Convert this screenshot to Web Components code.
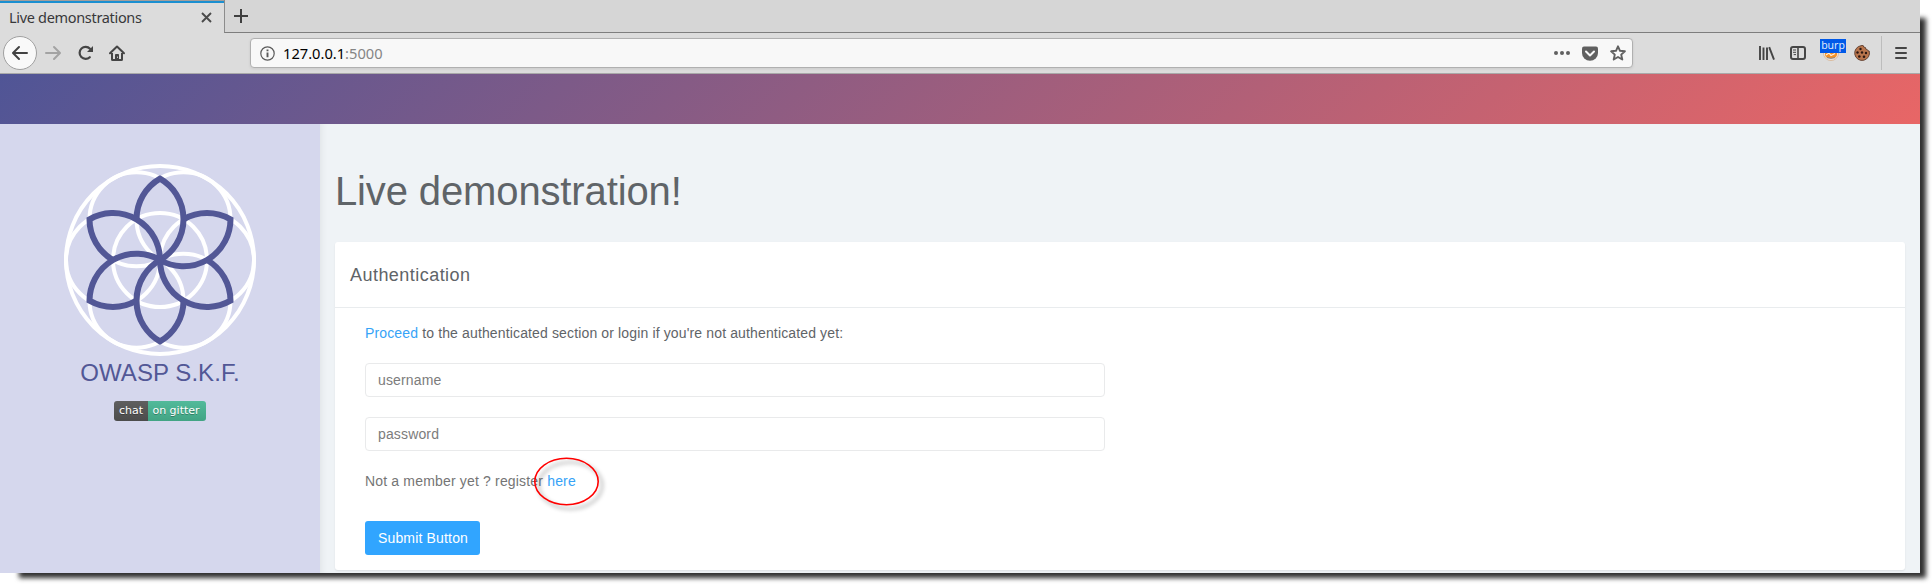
<!DOCTYPE html>
<html lang="en">
<head>
<meta charset="utf-8">
<title>Live demonstrations</title>
<style>
html,body{margin:0;background:#fff;overflow:hidden}
body{font-family:"Liberation Sans",Arial,sans-serif}
</style>
</head>
<body>
<app-window>
  <browser-tabs slot="chrome">Live demonstrations</browser-tabs>
  <browser-toolbar slot="chrome"></browser-toolbar>
  <page-banner slot="chrome"></page-banner>
  <side-bar slot="side">OWASP S.K.F.</side-bar>
  <page-title>Live demonstration!</page-title>
  <auth-card></auth-card>
</app-window>
<script>
const define=(name,html)=>customElements.define(name,class extends HTMLElement{
  constructor(){super();this.attachShadow({mode:'open'}).innerHTML=html;}
});

define('app-window',`<style>
:host{display:block;position:relative;width:1932px;height:585px;overflow:hidden}
.shade{position:absolute;left:19px;top:18px;width:1906.5px;height:559.5px;background:#303030;box-shadow:0 0 9px #303030;z-index:0;clip-path:none}
.shade{background:none;box-shadow:none}
.shade::before{content:"";position:absolute;inset:0;background:#303030;filter:blur(2.400px)}
.win{position:relative;z-index:1;width:1920px;height:573px;display:flex;flex-direction:column;background:#eff3f6;overflow:hidden}
.body{flex:1;display:flex;min-height:0}
main{flex:1;min-width:0;padding:0 15px;box-shadow:inset 6px 0 6px -4px rgba(0,0,0,.06)}
</style><div class="shade"></div><div class="win"><slot name="chrome"></slot>
<div class="body"><slot name="side"></slot><main><slot></slot></main></div></div>`);

define('browser-tabs',`<style>
:host{display:flex;height:33px;background:#d6d6d6;font:14.5px "Noto Sans",sans-serif;color:#38383a;box-sizing:border-box}
.tab{width:224px;box-sizing:border-box;background:#dcdcdc;border-top:1px solid #a39e9b;box-shadow:inset 0 2px #1b8fd0;padding:0 12px 0 9px;display:flex;align-items:center;justify-content:space-between}
.t{display:block;letter-spacing:-.32px;margin-top:-1px}
.rest{flex:1;border-left:1px solid #8c8c8c;border-bottom:1px solid #7e7e7e;padding:9px 0 0 9px}
svg{display:block}
</style><div class="tab"><span class="t"><slot></slot></span>
<svg width="11" height="11" viewBox="0 0 11 11"><path d="M1 1l9 9M10 1l-9 9" stroke="#4a4a4a" stroke-width="1.9"/></svg></div>
<div class="rest"><svg width="14" height="14" viewBox="0 0 14 14"><path d="M7 0v14M0 7h14" stroke="#3f3f3f" stroke-width="2"/></svg></div>`);

define('browser-toolbar',`<style>
:host{display:flex;align-items:center;height:41px;box-sizing:border-box;background:#dcdcdc;border-bottom:1px solid #a9a9a9;padding:0 13px 0 3px;color:#454545}
svg{display:block;flex:none;overflow:visible}
.back{width:32px;height:32px;border:1px solid #a0a0a0;border-radius:50%;background:#f9f9f9;display:flex;align-items:center;justify-content:center}
.url{display:flex;align-items:center;width:1383px;height:30px;box-sizing:border-box;margin-left:125px;border:1px solid #b0b0b0;border-radius:4px;background:#f8f8f8;box-shadow:0 1px 3px rgba(0,0,0,.08);padding:0 6px 0 9px;font:14.67px "Noto Sans",sans-serif;color:#000}
.url span{flex:1;padding-left:8px}.url i{font-style:normal;color:#858585}
.burp{position:relative;width:26px;height:28px;margin-left:14px}
.burp b{position:absolute;left:0;top:0;width:26px;height:14px;background:#0059e8;color:#dfe8fa;font:10.5px/13px "Noto Sans",sans-serif;text-align:center}
.burp svg{position:absolute;left:3px;top:6px}
.sep{width:1px;height:34px;background:#bdbdbd;margin-left:11px}
</style>
<div class="back"><svg width="16" height="14" viewBox="0 0 16 14" fill="none" stroke="#424242" stroke-width="2" stroke-linecap="round" stroke-linejoin="round"><path d="M15 7H1.5M7 1L1 7l6 6"/></svg></div>
<svg style="margin-left:8px" width="16" height="14" viewBox="0 0 16 14" fill="none" stroke="#a3a3a3" stroke-width="2" stroke-linecap="round" stroke-linejoin="round"><path d="M1 7h13.5M9 1l6 6-6 6"/></svg>
<svg style="margin-left:17px" width="16" height="16" viewBox="0 0 16 16" fill="none" stroke="#454545" stroke-width="2.2" stroke-linecap="round"><path d="M11.8 12.2A6 6 0 1 1 12 3.8"/><path d="M15 1v6H9z" fill="#454545" stroke="none"/></svg>
<svg style="margin-left:15px" width="16" height="16" viewBox="0 0 16 16" fill="none" stroke="#454545" stroke-width="2"><path d="M1 8.3L8 1.5l7 6.8" stroke-linecap="round" stroke-linejoin="round"/><path d="M3 8v6.5q0 .5.5.5h9q.5 0 .5-.5V8" /><path d="M6 15V9.8q0-.8.8-.8h2.4q.8 0 .8.8V15z" fill="#454545" stroke="none"/><path d="M8.5 11.6v1.2" stroke="#dcdcdc" stroke-width="1"/></svg>
<div class="url">
<svg width="15" height="15" viewBox="0 0 15 15" fill="none" stroke="#5a5a5a"><circle cx="7.5" cy="7.5" r="6.7" stroke-width="1.2"/><path d="M7.5 6.6v4.6M7.5 3.5v1.8" stroke-width="1.9"/></svg>
<span>127.0.0.1<i>:5000</i></span>
<svg width="16" height="4" viewBox="0 0 16 4" fill="#606060"><circle cx="2" cy="2" r="2"/><circle cx="8" cy="2" r="2"/><circle cx="14" cy="2" r="2"/></svg>
<svg style="margin-left:12px" width="16" height="15" viewBox="0 0 16 15"><path d="M2 .5h12q2 0 2 2V7a8 7.7 0 0 1-16 0V2.5q0-2 2-2z" fill="#606060"/><path d="M4 5.5l4 4 4-4" fill="none" stroke="#f8f8f8" stroke-width="2" stroke-linecap="round" stroke-linejoin="round"/></svg>
<svg style="margin-left:12px" width="16" height="16" viewBox="0 0 16 16"><path d="M8 1.3l2 4.5 4.9.5-3.7 3.3 1.1 4.9L8 12l-4.3 2.5 1.1-4.9L1.1 6.3 6 5.8z" fill="none" stroke="#606060" stroke-width="1.9" stroke-linejoin="round"/></svg>
</div>
<svg style="margin-left:126px" width="16" height="14" viewBox="0 0 16 14" fill="none" stroke="#454545" stroke-width="1.9"><path d="M1 0v14M4.5 1.5V14M8 1.5V14M10.2 1.2L15 13.6"/></svg>
<svg style="margin-left:15px" width="16" height="14" viewBox="0 0 16 14" fill="none" stroke="#454545" stroke-width="2"><rect x="1" y="1" width="14" height="12" rx="2"/><path d="M8 1v12" stroke-width="1.6"/><path d="M3 4h3M3 6.3h3M3.7 8.6H6" stroke-width="1"/></svg>
<div class="burp"><svg width="16" height="16" viewBox="0 0 16 16"><circle cx="8" cy="8" r="7.6" fill="#eee4da" stroke="#d5a67c" stroke-width=".6"/><path d="M2 6h12v4q-1 3-4 3H5q-3-1-3-4z" fill="#f29127"/><path d="M3 10l3-2 2 2.5 4-2" fill="none" stroke="#fff1df" stroke-width="1.2"/><path d="M4 12.6q4 1.6 8 0" fill="none" stroke="#8b8580" stroke-width="1"/></svg><b>burp</b></div>
<svg style="margin-left:8px" width="16" height="16" viewBox="0 0 16 16"><path d="M7 .7A7.4 7.4 0 1 0 15.2 6q-1.600.3-2-1.500-2 .2-1.800-2Q9 2.500 9.200.6 8 .4 7 .7z" fill="#b9754c" stroke="#5a3a2a" stroke-width=".9"/><g fill="#2b1712"><circle cx="6.500" cy="4" r="1.200"/><circle cx="3.500" cy="7.500" r="1.200"/><circle cx="8" cy="7.500" r="1.200"/><circle cx="12" cy="8" r="1.200"/><circle cx="5.300" cy="11.500" r="1.300"/><circle cx="10" cy="11.700" r="1.300"/></g></svg>
<div class="sep"></div>
<svg style="margin-left:13px" width="12" height="12" viewBox="0 0 12 12" stroke="#454545" stroke-width="2" stroke-linecap="round"><path d="M1 1h10M1 6h10M1 11h10"/></svg>`);

define('page-banner',`<style>:host{display:block;height:50px;background:linear-gradient(135deg,#505596,#e86666)}</style>`);

define('skf-logo',`<style>:host{display:block;width:192px;height:192px}svg{display:block}</style>
<svg width="192" height="192" viewBox="-96 -96 192 192" fill="none">
<defs><path id="p" d="M-23.500-40.700A47 47 0 0 1 0-81.400A47 47 0 0 1 0 0"/></defs>
<g stroke="#fff" stroke-width="4"><circle r="94"/><circle r="47"/>
<circle cx="47" r="47"/><circle cx="-47" r="47"/><circle cx="23.500" cy="40.700" r="47"/><circle cx="-23.500" cy="40.700" r="47"/><circle cx="23.500" cy="-40.700" r="47"/><circle cx="-23.500" cy="-40.700" r="47"/></g>
<g stroke="#525796" stroke-width="6"><use href="#p"/><use href="#p" transform="rotate(60)"/><use href="#p" transform="rotate(120)"/><use href="#p" transform="rotate(180)"/><use href="#p" transform="rotate(240)"/><use href="#p" transform="rotate(300)"/></g></svg>`);

define('gitter-badge',`<style>
:host{display:flex;width:92px;height:20px;border-radius:3px;overflow:hidden;font:11px/20px "DejaVu Sans",sans-serif;color:#fff;text-shadow:0 1px rgba(1,1,1,.3)}
span{text-align:center}
.a{width:34px;background:linear-gradient(#5f5f5f,#4c4c4c)}
.b{width:58px;background:linear-gradient(#52ba9a,#42a484);text-indent:-2px}
</style><span class="a">chat</span><span class="b">on gitter</span>`);

define('side-bar',`<style>
:host{display:flex;flex-direction:column;align-items:center;width:320px;flex:none;box-sizing:border-box;padding-top:40px;background:#d5d7ed;color:#525796}
.n{font-size:24px;line-height:28px;margin:3px 0 14px;letter-spacing:.05px}
</style><skf-logo></skf-logo><div class="n"><slot></slot></div><gitter-badge></gitter-badge>`);

define('page-title',`<style>:host{display:block;padding-top:43px;height:75px;font-size:40px;line-height:48px;letter-spacing:-.13px;color:#5f6468}</style><slot></slot>`);

define('form-field',`<style>:host{display:block}
input{display:block;box-sizing:border-box;width:740px;height:34px;border:1px solid #e9eaeb;border-radius:4px;padding:0 12px;background:#fff;font:14px "Liberation Sans",sans-serif;letter-spacing:.15px;outline:0}
input::placeholder{color:#7c7c7c;opacity:1}</style><input>`);

define('auth-card',`<style>
:host{display:block;height:328px;background:#fff;border-radius:3px;box-shadow:0 1px 2px rgba(0,0,0,.08);font-size:14px;letter-spacing:.14px;color:#5f6468}
h2{margin:0;height:65px;line-height:67px;padding-left:15px;border-bottom:1px solid #e9ecee;font-weight:400;font-size:18px;letter-spacing:.46px}
.c{padding:15px 30px 0;line-height:20px}
a{color:#36a3f7}
form-field{margin-top:20px}
.r{position:relative;margin-top:20px;color:#757575;letter-spacing:.17px}
.ring{position:absolute;left:168px;top:-14px;overflow:visible;filter:drop-shadow(4px 4px 2px rgba(0,0,0,.4))}
button{display:block;margin-top:30px;width:115px;height:34px;padding:0 0 0 1px;border:0;border-radius:3px;background:#31a5ff;color:#fff;font:14px "Liberation Sans",sans-serif;letter-spacing:.17px}
</style><h2>Authentication</h2><div class="c">
<div><a>Proceed</a> to the authenticated section or login if you're not authenticated yet:</div>
<form-field name="username"></form-field><form-field name="password"></form-field>
<div class="r">Not a member yet ? register <a>here</a>
<svg class="ring" width="66" height="49" viewBox="0 0 66 49"><ellipse cx="33.500" cy="24.500" rx="31.700" ry="23.200" fill="none" stroke="#f00" stroke-width="1.600"/></svg></div>
<button>Submit Button</button></div>`);
document.querySelector('auth-card').shadowRoot.querySelectorAll('form-field').forEach(f=>{
  f.shadowRoot.querySelector('input').placeholder=f.getAttribute('name');
});
</script>
</body>
</html>
